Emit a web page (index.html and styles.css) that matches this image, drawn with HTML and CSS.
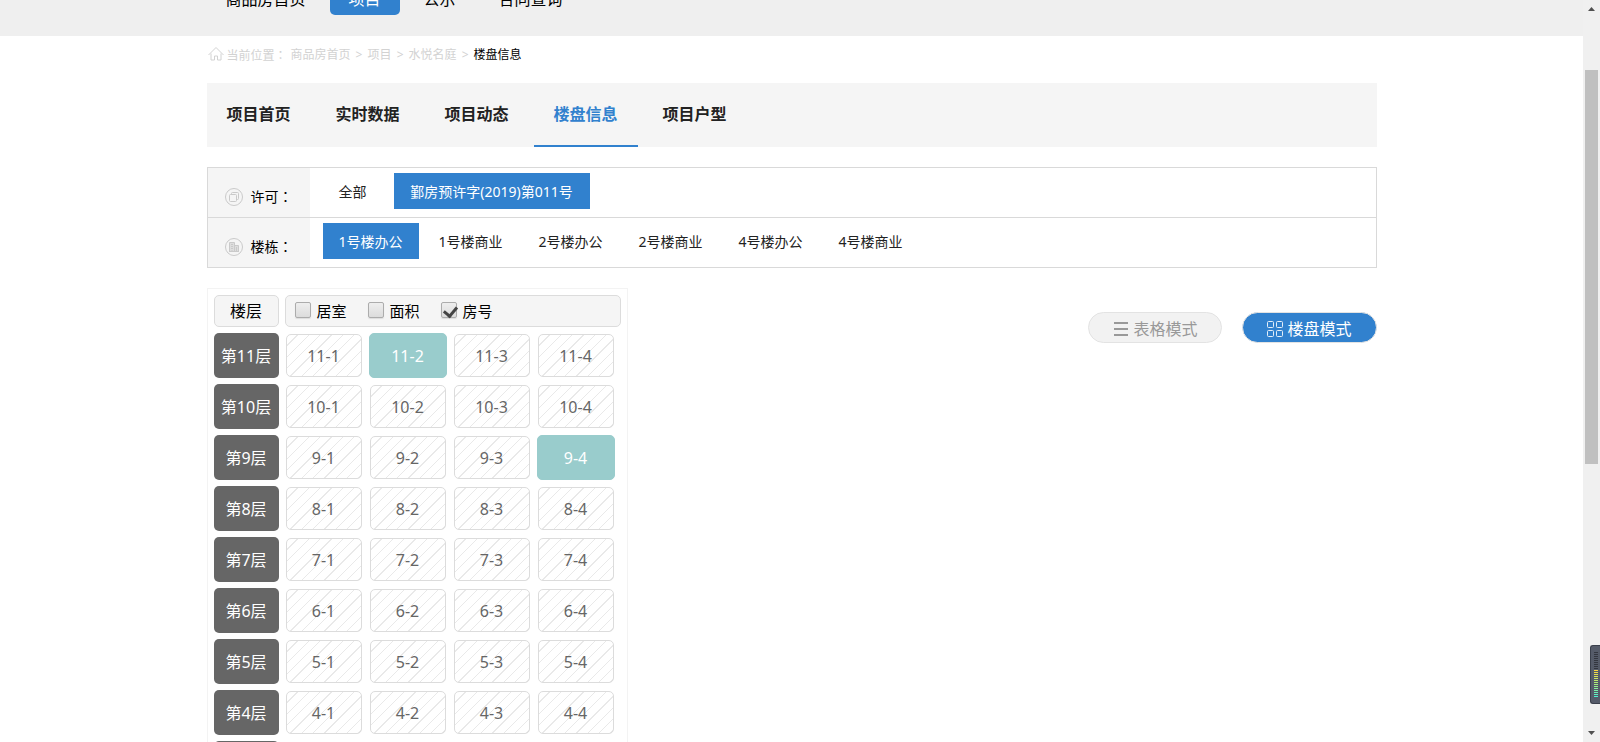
FILE: index.html
```html
<!DOCTYPE html>
<html lang="zh-CN">
<head>
<meta charset="utf-8">
<title>楼盘信息</title>
<link rel="stylesheet" href="styles.css">
</head>
<body>
<div class="page">
  <header class="site-header">
    <nav class="container site-nav">
      <a class="site-link" href="#">商品房首页</a>
      <a class="site-link active" href="#">项目</a>
      <a class="site-link" href="#">公示</a>
      <a class="site-link" href="#">合同查询</a>
    </nav>
  </header>
  <main class="container">
    <nav class="crumbs">
      <svg class="home-icon" viewBox="0 0 16 16" width="16" height="16" fill="none" stroke="#d2d2d2"><path d="M.5 9 8 1.500 15.500 9M3 7.500v6.500h3.500v-4h3v4H13V7.500"/></svg>
      <span class="crumb-label">当前位置<span class="colon" lang="zh-TW">：</span></span>
      <a href="#">商品房首页</a><span class="sep">&gt;</span><a href="#">项目</a><span class="sep">&gt;</span><a href="#">水悦名庭</a><span class="sep">&gt;</span><span class="current">楼盘信息</span>
    </nav>
    <nav class="tabs">
      <a class="tab" href="#">项目首页</a>
      <a class="tab" href="#">实时数据</a>
      <a class="tab" href="#">项目动态</a>
      <a class="tab active" href="#">楼盘信息</a>
      <a class="tab" href="#">项目户型</a>
    </nav>
    <section class="filters">
      <div class="filter">
        <div class="filter-name">
          <svg viewBox="0 0 18 18" width="18" height="18" fill="none" stroke="#cacaca"><circle cx="9" cy="9" r="8.500"/><rect x="4.500" y="6.500" width="7" height="7" rx="1"/><path d="M6.500 6.500v-1a1 1 0 0 1 1-1h5a1 1 0 0 1 1 1v5a1 1 0 0 1-1 1h-1"/></svg>
          <span>许可<span class="colon" lang="zh-TW">：</span></span>
        </div>
        <div class="options">
          <a class="option all" href="#">全部</a>
          <a class="option licence active" href="#">鄞房预许字(2019)第011号</a>
        </div>
      </div>
      <div class="filter">
        <div class="filter-name">
          <svg viewBox="0 0 18 18" width="18" height="18" fill="none" stroke="#cacaca"><circle cx="9" cy="9" r="8.500"/><path fill="#dedede" d="M4.500 13.500v-9h5v9zM9.500 7.500h4v6h-4z"/><path d="M4 13.500h10M6 6.500h2M6 8.500h2M6 10.500h2M11.500 9v4M7 12v2"/></svg>
          <span>楼栋<span class="colon" lang="zh-TW">：</span></span>
        </div>
        <div class="options">
          <a class="option active" href="#">1号楼办公</a>
          <a class="option" href="#">1号楼商业</a>
          <a class="option" href="#">2号楼办公</a>
          <a class="option" href="#">2号楼商业</a>
          <a class="option" href="#">4号楼办公</a>
          <a class="option" href="#">4号楼商业</a>
        </div>
      </div>
    </section>
    <div class="content">
      <section class="building">
        <div class="building-head">
          <div class="floor-title">楼层</div>
          <div class="toggles">
            <label class="toggle"><input type="checkbox">居室</label>
            <label class="toggle"><input type="checkbox">面积</label>
            <label class="toggle"><input type="checkbox" checked>房号</label>
          </div>
        </div>
        <div class="floor"><div class="floor-name">第11层</div><a class="room" href="#">11-1</a><a class="room open" href="#">11-2</a><a class="room" href="#">11-3</a><a class="room" href="#">11-4</a></div>
        <div class="floor"><div class="floor-name">第10层</div><a class="room" href="#">10-1</a><a class="room" href="#">10-2</a><a class="room" href="#">10-3</a><a class="room" href="#">10-4</a></div>
        <div class="floor"><div class="floor-name">第9层</div><a class="room" href="#">9-1</a><a class="room" href="#">9-2</a><a class="room" href="#">9-3</a><a class="room open" href="#">9-4</a></div>
        <div class="floor"><div class="floor-name">第8层</div><a class="room" href="#">8-1</a><a class="room" href="#">8-2</a><a class="room" href="#">8-3</a><a class="room" href="#">8-4</a></div>
        <div class="floor"><div class="floor-name">第7层</div><a class="room" href="#">7-1</a><a class="room" href="#">7-2</a><a class="room" href="#">7-3</a><a class="room" href="#">7-4</a></div>
        <div class="floor"><div class="floor-name">第6层</div><a class="room" href="#">6-1</a><a class="room" href="#">6-2</a><a class="room" href="#">6-3</a><a class="room" href="#">6-4</a></div>
        <div class="floor"><div class="floor-name">第5层</div><a class="room" href="#">5-1</a><a class="room" href="#">5-2</a><a class="room" href="#">5-3</a><a class="room" href="#">5-4</a></div>
        <div class="floor"><div class="floor-name">第4层</div><a class="room" href="#">4-1</a><a class="room" href="#">4-2</a><a class="room" href="#">4-3</a><a class="room" href="#">4-4</a></div>
        <div class="floor"><div class="floor-name"></div></div>
      </section>
      <div class="modes">
        <button class="mode" type="button"><svg viewBox="0 0 16 16" width="16" height="16" stroke="#999" stroke-width="2"><path d="M1 2h14M1 8h14M1 14h14"/></svg>表格模式</button>
        <button class="mode active" type="button"><svg viewBox="0 0 16 16" width="16" height="16" fill="none" stroke="#e4eff9"><rect x=".5" y=".5" width="6" height="6" rx="1"/><rect x="9.500" y=".5" width="6" height="6" rx="1"/><rect x=".5" y="9.500" width="6" height="6" rx="1"/><rect x="9.500" y="9.500" width="6" height="6" rx="1"/></svg>楼盘模式</button>
      </div>
    </div>
  </main>
</div>
<div class="scrollbar">
  <svg viewBox="0 0 7 4" width="7" height="4" fill="#505050"><path d="M0 4 3.500 0 7 4z"/></svg>
  <div class="track"><div class="thumb"></div></div>
  <svg viewBox="0 0 7 4" width="7" height="4" fill="#505050"><path d="M0 0h7L3.500 4z"/></svg>
</div>
<div class="meter"><div class="meter-idle"></div><div class="meter-live"></div></div>
</body>
</html>
```

FILE: styles.css
```css
* { box-sizing: border-box; }

body {
  margin: 0;
  height: 100vh;
  display: flex;
  overflow: hidden;
  background: #fff;
  color: #000;
  font: 16px/24px "Noto Sans", "Noto Sans CJK SC", sans-serif;
}

a { color: inherit; text-decoration: none; }
svg { flex: none; }

.page { flex: 1; min-width: 0; height: 100vh; overflow: hidden; }
.container { max-width: 1170px; margin: 0 auto; }
.colon { font-family: "Noto Sans CJK TC", sans-serif; }

.site-header { height: 51px; margin-top: -15px; background: #efefef; }
.site-nav { display: flex; gap: 5px; }
.site-link { height: 30px; padding: 0 19px; line-height: 28px; border-radius: 5px; }
.site-link.active { background: #3181ce; color: #fff; }

.crumbs {
  display: flex;
  align-items: center;
  height: 47px;
  padding: 0 0 9px 1px;
  font-size: 12px;
  line-height: 18px;
  color: #d2d2d2;
}
.home-icon { margin-bottom: 2px; }
.crumb-label { margin: 0 4px 0 3px; }
.sep { width: 17px; text-align: center; }
.current { color: #000; }

.tabs { display: flex; gap: 5px; background: #f5f5f5; }
.tab {
  height: 64px;
  padding: 0 20px;
  line-height: 62px;
  font-weight: bold;
  color: #222;
}
.tab.active { color: #3181ce; border-bottom: 2px solid #3181ce; }

.filters {
  margin-top: 20px;
  border: 1px solid #d9d9d9;
  font-size: 14px;
  line-height: 22px;
}
.filter { display: flex; height: 49px; }
.filter + .filter { height: 50px; border-top: 1px solid #d9d9d9; }
.filter-name {
  display: flex;
  align-items: center;
  gap: 8px;
  width: 102px;
  padding: 9px 0 0 17px;
  background: #f5f5f5;
}
.filter-name > span { padding-bottom: 2px; }
.options { display: flex; gap: 4px; padding: 5px 0 0 13px; color: #222; }
.option { height: 36px; padding: 0 16px; line-height: 38px; }
.option.all { margin-right: 7px; }
.option.licence { min-width: 196px; text-align: center; }
.option.active { background: #3181ce; color: #fff; }

.content {
  display: flex;
  justify-content: space-between;
  align-items: flex-start;
  margin-top: 20px;
}

.building {
  display: flex;
  flex-direction: column;
  gap: 6px;
  padding: 6px;
  border: 1px solid #f3f3f3;
}
.building-head, .floor { display: flex; gap: 6px; }
.floor-title, .toggles {
  height: 32px;
  line-height: 30px;
  border: 1px solid #dcdcdc;
  border-radius: 5px;
  background: #f5f5f5;
}
.floor-title { width: 65px; text-align: center; }
.toggles {
  display: flex;
  gap: 21px;
  width: 336px;
  padding: 0 9px;
  font-size: 15px;
}
.toggle { display: flex; gap: 6px; }
.toggle input {
  appearance: none;
  width: 16px;
  height: 16px;
  margin: 6px 0 0;
  border: 1px solid #acacac;
  border-radius: 2px;
  background: linear-gradient(#eee, #dcdcdc);
  box-shadow: 0 1px 1px #ddd;
}
.toggle input:checked::after {
  content: "";
  display: block;
  width: 6px;
  height: 10px;
  margin: 1px 0 0 4px;
  border: solid #444;
  border-width: 0 3px 3px 0;
  transform: rotate(40deg);
}

.floor-name {
  width: 65px;
  height: 45px;
  line-height: 46px;
  border-radius: 5px;
  background: #666;
  color: #fff;
  text-align: center;
}
.room {
  width: 76px;
  height: 43px;
  margin: 1px;
  line-height: 42px;
  border: 1px solid #dcdcdc;
  border-radius: 5px;
  background: repeating-linear-gradient(135deg, #fff 0, #fff 7px, #e9e9e9 7px, #e9e9e9 8px);
  color: #666;
  text-align: center;
}
.room.open {
  width: 78px;
  height: 45px;
  margin: 0;
  line-height: 44px;
  border-color: #99cccc;
  background: #99cccc;
  color: #fff;
}

.modes { display: flex; gap: 20px; padding-top: 24px; }
.mode {
  display: flex;
  align-items: center;
  gap: 4px;
  height: 31px;
  padding: 2px 24px 0;
  border: 1px solid #e3e3e3;
  border-radius: 16px;
  background: #f2f2f2;
  color: #999;
  font: inherit;
}
.mode.active { background: #3181ce; color: #fff; }

.scrollbar {
  display: flex;
  flex-direction: column;
  align-items: center;
  width: 17px;
  padding: 7px 0;
  background: #f0f0f0;
}
.track { flex: 1; padding-top: 59px; }
.thumb { width: 13px; height: 394px; background: #c0c0c0; }

.meter {
  position: fixed;
  right: 0;
  bottom: 38px;
  width: 10px;
  height: 59px;
  padding: 6px 2px 0 3px;
  border: 1px solid #3a3f4b;
  border-right: 0;
  border-radius: 3px 0 0 3px;
  background: #555b69;
}
.meter-idle { height: 18px; background: repeating-linear-gradient(#33363f 0 1px, #555b69 1px 2px); }
.meter-live {
  height: 28px;
  background:
    repeating-linear-gradient(transparent 0 1px, #555b69 1px 2px),
    linear-gradient(#ffd83c, #a8f07c 50%, #45f0d8);
}
```
